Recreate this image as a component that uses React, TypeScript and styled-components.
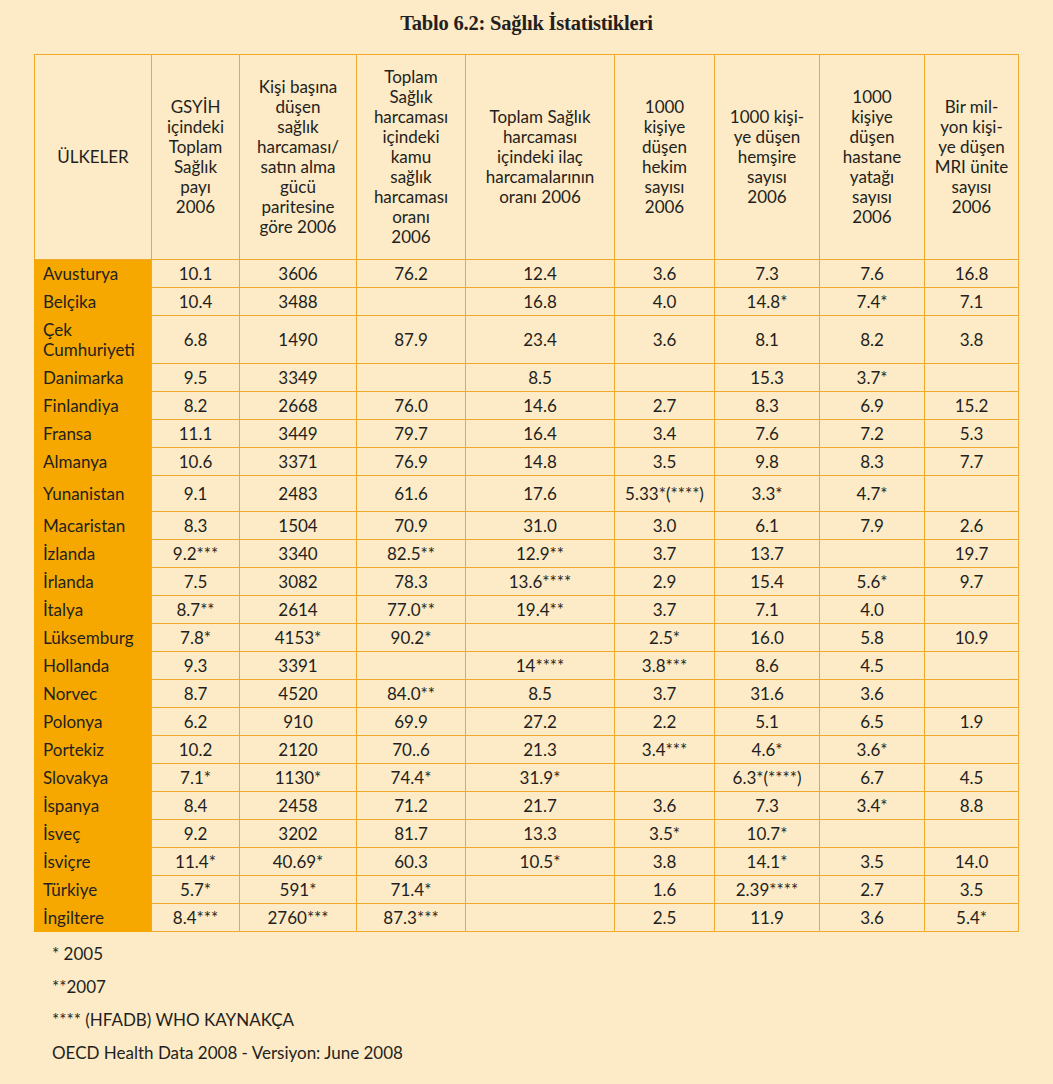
import React from "react";
import styled, { createGlobalStyle } from "styled-components";

const GlobalStyle = createGlobalStyle`
  html, body {
    margin: 0;
    padding: 0;
    background: #fdeac6;
  }
  body {
    font-family: Lato, "Open Sans", sans-serif;
    color: #231f20;
  }
`;

const Page = styled.div`
  width: 1053px;
  min-height: 1084px;
  box-sizing: border-box;
  padding-top: 11px;
  background: #fdeac6;
`;

const Title = styled.h1`
  margin: 0 0 19px 0;
  text-align: center;
  font-family: "Liberation Serif", "Times New Roman", serif;
  font-weight: 700;
  font-size: 20.5px;
  line-height: 24px;
  letter-spacing: -0.2px;
  color: #231f20;
`;

const Table = styled.table`
  width: 984px;
  margin: 0 auto;
  border-collapse: collapse;
  table-layout: fixed;
  font-size: 17px;
  line-height: 20px;
`;

const HeadCell = styled.th`
  height: 204px;
  padding: 0 3px;
  border: 1px solid #efaa2c;
  text-align: center;
  vertical-align: middle;
  font-weight: 400;
  line-height: 20px;
  color: #231f20;
`;

const Row = styled.tr<{ $h: number }>`
  height: ${(p) => p.$h}px;
`;

const CountryCell = styled.td`
  padding: 0 4px 0 8px;
  background: #f6a800;
  border: none;
  border-left: 1px solid #f6a800;
  text-align: left;
  vertical-align: middle;
  color: #231f20;
`;

const ValueCell = styled.td`
  padding: 0 3px;
  border: 1px solid #efaa2c;
  text-align: center;
  vertical-align: middle;
  white-space: nowrap;
  color: #231f20;
`;

const Notes = styled.div`
  padding: 5px 0 0 52px;
  font-size: 17px;
`;

const Note = styled.div`
  line-height: 33px;
`;

const widths = [117, 88, 117, 109, 149, 100, 105, 105, 94];

const headers: string[][] = [
  ["ÜLKELER"],
  ["GSYİH", "içindeki", "Toplam", "Sağlık", "payı", "2006"],
  ["Kişi başına", "düşen", "sağlık", "harcaması/", "satın alma", "gücü", "paritesine", "göre 2006"],
  ["Toplam", "Sağlık", "harcaması", "içindeki", "kamu", "sağlık", "harcaması", "oranı", "2006"],
  ["Toplam Sağlık", "harcaması", "içindeki ilaç", "harcamalarının", "oranı 2006"],
  ["1000", "kişiye", "düşen", "hekim", "sayısı", "2006"],
  ["1000 kişi-", "ye düşen", "hemşire", "sayısı", "2006"],
  ["1000", "kişiye", "düşen", "hastane", "yatağı", "sayısı", "2006"],
  ["Bir mil-", "yon kişi-", "ye düşen", "MRI ünite", "sayısı", "2006"],
];

type DataRow = { name: string[]; h: number; v: string[] };

const rows: DataRow[] = [
  { name: ["Avusturya"], h: 28, v: ["10.1", "3606", "76.2", "12.4", "3.6", "7.3", "7.6", "16.8"] },
  { name: ["Belçika"], h: 28, v: ["10.4", "3488", "", "16.8", "4.0", "14.8*", "7.4*", "7.1"] },
  { name: ["Çek", "Cumhuriyeti"], h: 48, v: ["6.8", "1490", "87.9", "23.4", "3.6", "8.1", "8.2", "3.8"] },
  { name: ["Danimarka"], h: 28, v: ["9.5", "3349", "", "8.5", "", "15.3", "3.7*", ""] },
  { name: ["Finlandiya"], h: 28, v: ["8.2", "2668", "76.0", "14.6", "2.7", "8.3", "6.9", "15.2"] },
  { name: ["Fransa"], h: 28, v: ["11.1", "3449", "79.7", "16.4", "3.4", "7.6", "7.2", "5.3"] },
  { name: ["Almanya"], h: 28, v: ["10.6", "3371", "76.9", "14.8", "3.5", "9.8", "8.3", "7.7"] },
  { name: ["Yunanistan"], h: 36, v: ["9.1", "2483", "61.6", "17.6", "5.33*(****)", "3.3*", "4.7*", ""] },
  { name: ["Macaristan"], h: 28, v: ["8.3", "1504", "70.9", "31.0", "3.0", "6.1", "7.9", "2.6"] },
  { name: ["İzlanda"], h: 28, v: ["9.2***", "3340", "82.5**", "12.9**", "3.7", "13.7", "", "19.7"] },
  { name: ["İrlanda"], h: 28, v: ["7.5", "3082", "78.3", "13.6****", "2.9", "15.4", "5.6*", "9.7"] },
  { name: ["İtalya"], h: 28, v: ["8.7**", "2614", "77.0**", "19.4**", "3.7", "7.1", "4.0", ""] },
  { name: ["Lüksemburg"], h: 28, v: ["7.8*", "4153*", "90.2*", "", "2.5*", "16.0", "5.8", "10.9"] },
  { name: ["Hollanda"], h: 28, v: ["9.3", "3391", "", "14****", "3.8***", "8.6", "4.5", ""] },
  { name: ["Norvec"], h: 28, v: ["8.7", "4520", "84.0**", "8.5", "3.7", "31.6", "3.6", ""] },
  { name: ["Polonya"], h: 28, v: ["6.2", "910", "69.9", "27.2", "2.2", "5.1", "6.5", "1.9"] },
  { name: ["Portekiz"], h: 28, v: ["10.2", "2120", "70..6", "21.3", "3.4***", "4.6*", "3.6*", ""] },
  { name: ["Slovakya"], h: 28, v: ["7.1*", "1130*", "74.4*", "31.9*", "", "6.3*(****)", "6.7", "4.5"] },
  { name: ["İspanya"], h: 28, v: ["8.4", "2458", "71.2", "21.7", "3.6", "7.3", "3.4*", "8.8"] },
  { name: ["İsveç"], h: 28, v: ["9.2", "3202", "81.7", "13.3", "3.5*", "10.7*", "", ""] },
  { name: ["İsviçre"], h: 28, v: ["11.4*", "40.69*", "60.3", "10.5*", "3.8", "14.1*", "3.5", "14.0"] },
  { name: ["Türkiye"], h: 28, v: ["5.7*", "591*", "71.4*", "", "1.6", "2.39****", "2.7", "3.5"] },
  { name: ["İngiltere"], h: 28, v: ["8.4***", "2760***", "87.3***", "", "2.5", "11.9", "3.6", "5.4*"] },
];

const notes = [
  "* 2005",
  "**2007",
  "**** (HFADB) WHO KAYNAKÇA",
  "OECD Health Data 2008 - Versiyon: June 2008",
];

const Lines: React.FC<{ lines: string[] }> = ({ lines }) => (
  <>
    {lines.map((l, i) => (
      <React.Fragment key={i}>
        {i > 0 && <br />}
        {l}
      </React.Fragment>
    ))}
  </>
);

export default function App() {
  return (
    <Page>
      <GlobalStyle />
      <Title>Tablo 6.2: Sağlık İstatistikleri</Title>
      <Table>
        <colgroup>
          {widths.map((w, i) => (
            <col key={i} style={{ width: w }} />
          ))}
        </colgroup>
        <thead>
          <tr>
            {headers.map((h, i) => (
              <HeadCell key={i}>
                <Lines lines={h} />
              </HeadCell>
            ))}
          </tr>
        </thead>
        <tbody>
          {rows.map((r, i) => (
            <Row key={i} $h={r.h}>
              <CountryCell>
                <Lines lines={r.name} />
              </CountryCell>
              {r.v.map((v, j) => (
                <ValueCell key={j}>{v}</ValueCell>
              ))}
            </Row>
          ))}
        </tbody>
      </Table>
      <Notes>
        {notes.map((n, i) => (
          <Note key={i}>{n}</Note>
        ))}
      </Notes>
    </Page>
  );
}
